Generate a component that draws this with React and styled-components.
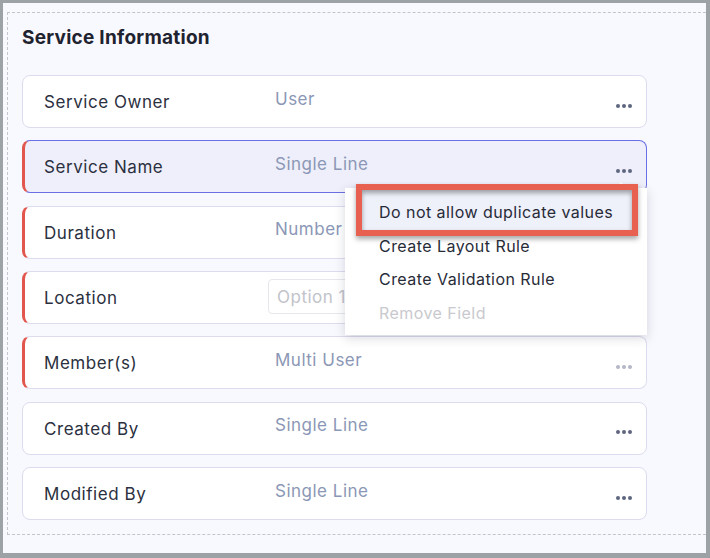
import styled, { createGlobalStyle } from "styled-components";

const GlobalStyle = createGlobalStyle`
  html, body {
    margin: 0;
    padding: 0;
    background: #9ca2a5;
  }
  body {
    font-family: "Inter", "Noto Sans", sans-serif;
    -webkit-font-smoothing: antialiased;
  }
`;

const Frame = styled.div`
  margin: 3px 4px 0 3px;
  height: 550px;
  background: #f8f9fe;
  box-sizing: border-box;
  padding: 9px 0 0 4px;
  overflow: hidden;
`;

const Section = styled.section`
  border: 1px dashed #c4c4cf;
  border-right: none;
  padding: 14px 0 14px 14px;
`;

const Title = styled.h2`
  margin: 0 0 26px 0;
  font-size: 19px;
  line-height: 22px;
  font-weight: 700;
  color: #1f2330;
  letter-spacing: 0.25px;
`;

const List = styled.div`
  display: flex;
  flex-direction: column;
  gap: 12.35px;
  width: 625px;
`;

const Card = styled.div`
  position: relative;
  display: flex;
  align-items: center;
  height: 53px;
  box-sizing: border-box;
  border: 1px solid ${(p) => (p.$active ? "#6a6fe3" : "#dddcee")};
  border-left: ${(p) =>
    p.$required ? "3px solid #e1564d" : `1px solid ${p.$active ? "#6a6fe3" : "#dddcee"}`};
  border-radius: 8px;
  background: ${(p) => (p.$active ? "#eeeffa" : "#ffffff")};
  padding: 0 14px 0 ${(p) => (p.$required ? "19px" : "21px")};
`;

const Label = styled.div`
  width: 231px;
  flex-shrink: 0;
  font-size: 17px;
  letter-spacing: 0.55px;
  color: #2b3040;
  padding-top: 1px;
`;

const Value = styled.div`
  flex: 1;
  font-size: 17px;
  letter-spacing: 0.5px;
  color: #8b97b6;
  padding-bottom: 6px;
`;

const OptionBox = styled.div`
  margin-left: -7px;
  flex: 1;
  height: 35px;
  box-sizing: border-box;
  border: 1px solid #e6e6ec;
  border-radius: 4px;
  padding: 0 8px;
  display: flex;
  align-items: center;
  font-size: 17px;
  letter-spacing: 0.5px;
  color: #c1c3ca;
  background: #fff;
  margin-top: -2px;
`;

const Dots = styled.div`
  display: flex;
  gap: 2px;
  padding-top: 8px;
  margin-left: auto;
  span {
    width: 4px;
    height: 4px;
    border-radius: 50%;
    background: ${(p) => (p.$muted ? "#b4b8c6" : "#5e6680")};
  }
`;

const Menu = styled.div`
  position: absolute;
  top: 47px;
  right: -1px;
  width: 302px;
  background: #fff;
  box-shadow: 0 3px 10px rgba(40, 44, 70, 0.18);
  padding: 7px 0 6px 0;
  z-index: 5;
  &::before {
    content: "";
    position: absolute;
    top: -6px;
    right: 21px;
    border-left: 5px solid transparent;
    border-right: 5px solid transparent;
    border-bottom: 6px solid #fff;
  }
`;

const Annotation = styled.div`
  position: absolute;
  top: -4px;
  left: 11px;
  right: 9px;
  height: 52px;
  box-sizing: border-box;
  border: 6px solid #e8604f;
  background: #eef0fa;
  box-shadow: 0 3px 5px rgba(0, 0, 0, 0.35), inset 0 3px 5px rgba(0, 0, 0, 0.35);
`;

const MenuItem = styled.div`
  position: relative;
  z-index: 1;
  height: 33.5px;
  display: flex;
  align-items: center;
  padding-left: 34px;
  font-size: 16px;
  letter-spacing: 0.45px;
  color: ${(p) => (p.$disabled ? "#c9c9ce" : "#272b38")};
`;

const fields = [
  { label: "Service Owner", value: "User" },
  { label: "Service Name", value: "Single Line", required: true, active: true },
  { label: "Duration", value: "Number", required: true },
  { label: "Location", option: "Option 1", required: true },
  { label: "Member(s)", value: "Multi User", required: true, muted: true },
  { label: "Created By", value: "Single Line" },
  { label: "Modified By", value: "Single Line" },
];

function MoreDots({ muted }) {
  return (
    <Dots $muted={muted}>
      <span />
      <span />
      <span />
    </Dots>
  );
}

export default function App() {
  return (
    <>
      <GlobalStyle />
      <Frame>
        <Section>
          <Title>Service Information</Title>
          <List>
            {fields.map((f) => (
              <Card key={f.label} $required={f.required} $active={f.active}>
                <Label>{f.label}</Label>
                {f.option ? (
                  <OptionBox>{f.option}</OptionBox>
                ) : (
                  <Value>{f.value}</Value>
                )}
                {!f.option && <MoreDots muted={f.muted} />}
                {f.active && (
                  <Menu>
                    <Annotation />
                    <MenuItem>Do not allow duplicate values</MenuItem>
                    <MenuItem>Create Layout Rule</MenuItem>
                    <MenuItem>Create Validation Rule</MenuItem>
                    <MenuItem $disabled>Remove Field</MenuItem>
                  </Menu>
                )}
              </Card>
            ))}
          </List>
        </Section>
      </Frame>
    </>
  );
}
